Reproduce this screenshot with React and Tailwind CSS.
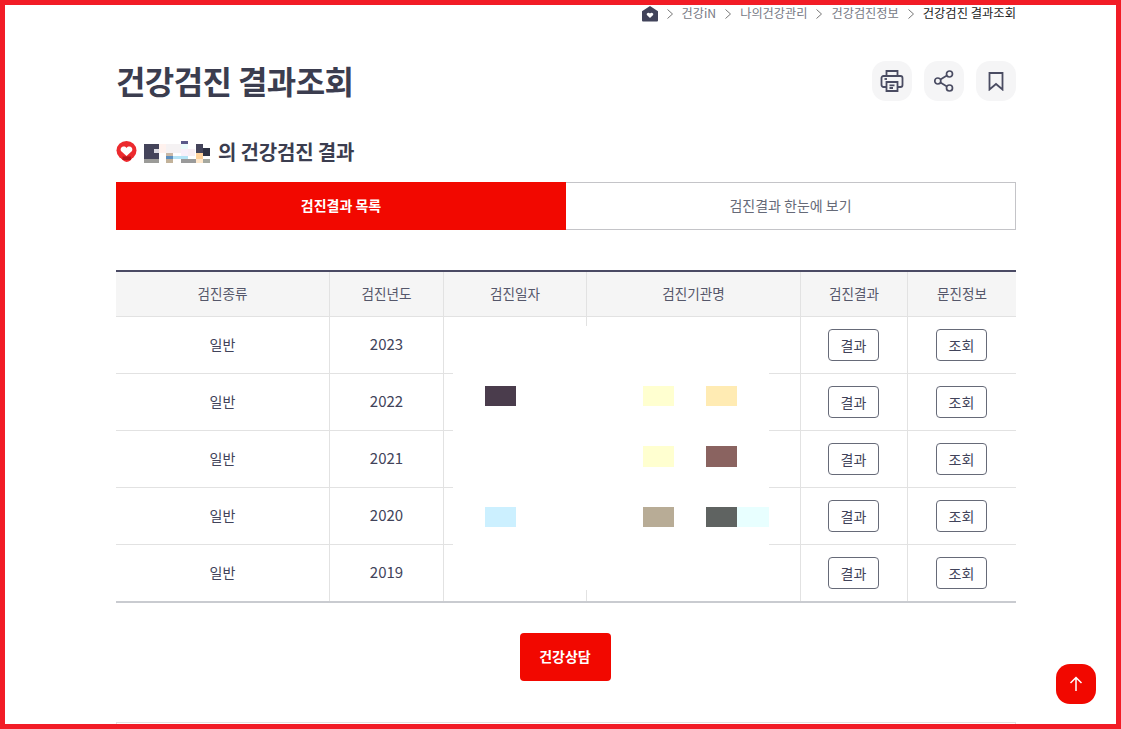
import React from "react";

const rows = ["2023", "2022", "2021", "2020", "2019"];
const font = { fontFamily: '"Noto Sans CJK KR", "Noto Sans", sans-serif' };

function Home() {
  return (
    <svg width="16" height="16" viewBox="0 0 16 16">
      <path d="M0 5.2 8 0l8 5.2V14.5a1 1 0 0 1-1 1H1a1 1 0 0 1-1-1z" fill="#41435a" />
      <path d="M8 12 4.9 8.9C3.9 7.2 6.6 5.8 8 7.4c1.4-1.6 4.1-.2 3.1 1.5z" fill="#fff" />
    </svg>
  );
}

function Chevron() {
  return (
    <svg width="6" height="10" viewBox="0 0 6 10" fill="none" stroke="#777" strokeWidth="1">
      <path d="M.5.5 5.5 5 .5 9.5" />
    </svg>
  );
}

function Mosaic() {
  const cells = [
    [0, 3, 15, 15, "#44445a"], [10, 8, 5, 4, "#dcdce2"], [0, 18, 15, 4, "#9b9b98"],
    [15, 3, 7, 9, "#fff2ee"], [22, 3, 15, 9, "#f5f2f3"], [22, 12, 7, 3, "#c9b8a6"], [22, 15, 7, 3, "#5d8fbe"], [22, 18, 7, 4, "#c2b29a"],
    [29, 15, 15, 3, "#b5e4f6"], [37, 0, 7, 3, "#5a5a8a"], [37, 3, 7, 5, "#eafbfb"], [37, 8, 7, 7, "#f8f0fa"],
    [37, 18, 15, 4, "#9a9a9a"], [44, 8, 7, 7, "#f8eef4"], [52, 3, 7, 9, "#44445a"], [59, 7, 7, 8, "#2e3142"],
    [52, 12, 7, 6, "#ffd29c"], [52, 18, 7, 4, "#ffe8cc"], [59, 18, 7, 4, "#a5a89f"],
  ];
  return (
    <svg width="66" height="22" viewBox="0 0 66 22" shapeRendering="crispEdges">
      {cells.map(([x, y, w, h, c], i) => (
        <rect key={i} x={x} y={y} width={w} height={h} fill={c} />
      ))}
    </svg>
  );
}

function Pin() {
  return (
    <svg width="21" height="22" viewBox="0 0 21 22">
      <ellipse cx="10.5" cy="9.5" rx="10" ry="9.5" fill="#ec2a2e" />
      <path d="M4 16c1.5 2 3.5 4.5 6.5 5 3 0 5-2.5 6.5-5z" fill="#ec2a2e" />
      <path d="M6.5 15.5h8.5V19H6.5z" fill="#b8141a" />
      <path d="M10.5 15 5 10C3.2 6.6 8.2 3.8 10.5 7c2.3-3.2 7.3-.4 5.5 3z" fill="#fff" />
    </svg>
  );
}

function RoundBtn({ children }) {
  return (
    <div className="w-10 h-10 rounded-[14px] bg-[#f5f5f6] flex items-center justify-center">{children}</div>
  );
}

function Cell({ children, className = "" }) {
  return <div className={`flex items-center justify-center border-r border-[#e2e2e2] last:border-r-0 ${className}`}>{children}</div>;
}

function Btn({ children }) {
  return (
    <div className="w-[51px] h-8 pl-px rounded border border-[#666a78] flex items-center justify-center text-[14px] text-[#41435a]">
      {children}
    </div>
  );
}

const grid = "grid grid-cols-[214px_114px_143px_214px_107px_108px]";
const blocks = [
  ["left-[32px] top-[60px] h-[20px]", "bg-[#4a3c4c]"],
  ["left-[190px] top-[60px] h-[20px]", "bg-[#ffffd0]"],
  ["left-[253px] top-[60px] h-[20px]", "bg-[#ffebb3]"],
  ["left-[190px] top-[120px] h-[21px]", "bg-[#ffffd0]"],
  ["left-[253px] top-[120px] h-[21px]", "bg-[#8a6360]"],
  ["left-[32px] top-[181px] h-[20px]", "bg-[#ccf0ff]"],
  ["left-[190px] top-[181px] h-[20px]", "bg-[#b8ac96]"],
  ["left-[253px] top-[181px] h-[20px]", "bg-[#5f6361]"],
  ["left-[284px] top-[181px] w-[32px] h-[20px]", "bg-[#e8ffff]"],
];

export default function App() {
  return (
    <div className="relative h-[729px] overflow-hidden bg-white text-[#41435a]" style={font}>
      <div className="w-[900px] ml-[116px]">
        <div className="h-[27px] flex items-center justify-end gap-[9px] text-[12.2px] text-[#777a85]">
          <Home />
          <Chevron />
          <span>건강iN</span>
          <Chevron />
          <span>나의건강관리</span>
          <Chevron />
          <span>건강검진정보</span>
          <Chevron />
          <span className="text-[#1a1a22] text-[12.3px]">건강검진 결과조회</span>
        </div>

        <div className="mt-[34px] h-10 flex items-center justify-between">
          <h1 className="text-[32px] font-bold tracking-[-0.6px] text-[#3b3d4f] pb-[2px]">건강검진 결과조회</h1>
          <div className="flex gap-[12px]">
            <RoundBtn>
              <svg width="24" height="24" viewBox="0 0 24 24" fill="none" stroke="#4a4c62" strokeWidth="1.8">
                <path d="M6.5 7V2h11v5" />
                <path d="M6.5 18H3.5a2 2 0 0 1-2-2V9a2 2 0 0 1 2-2h17a2 2 0 0 1 2 2v7a2 2 0 0 1-2 2h-3" />
                <path d="M6.5 13h11v9h-11zM9.5 16.3h5M9.5 19h3.5" />
                <path d="M4.5 10h2.5" />
              </svg>
            </RoundBtn>
            <RoundBtn>
              <svg width="20" height="22" viewBox="0 0 20 22" fill="none" stroke="#4a4c62" strokeWidth="1.7">
                <circle cx="15.5" cy="4" r="3" />
                <circle cx="15.5" cy="18" r="3" />
                <circle cx="3.8" cy="11" r="3" />
                <path d="M6.4 9.5l6.5-4M6.4 12.5l6.5 4" />
              </svg>
            </RoundBtn>
            <RoundBtn>
              <svg width="16" height="19" viewBox="0 0 16 19" fill="none" stroke="#4a4c62" strokeWidth="1.8">
                <path d="M1.5 1h13v16.5L8 12l-6.5 5.5z" />
              </svg>
            </RoundBtn>
          </div>
        </div>

        <div className="mt-[38px] h-[25px] flex items-center">
          <Pin />
          <div className="ml-[7px] flex"><Mosaic /></div>
          <span className="ml-[8px] text-[20px] font-bold text-[#3b3d4f] tracking-[-0.2px]">의 건강검진 결과</span>
        </div>

        <div className="mt-[18px] grid grid-cols-2 h-12 text-[14px]">
          <div className="bg-[#f20800] text-white font-bold flex items-center justify-center pb-[2px]">검진결과 목록</div>
          <div className="border border-l-0 border-[#c4c4c8] text-[#666a78] flex items-center justify-center pb-[2px]">검진결과 한눈에 보기</div>
        </div>

        <div className="relative mt-10 text-[14px]">
          <div className={`${grid} h-[47px] border-t-2 border-[#4a4a64] border-b border-b-[#e2e2e2] bg-[#f5f5f5] text-[#55576a] text-[13.6px]`}>
            {["검진종류", "검진년도", "검진일자", "검진기관명", "검진결과", "문진정보"].map((t) => (
              <Cell key={t} className="pb-[2px]">{t}</Cell>
            ))}
          </div>
          {rows.map((y, i) => (
            <div key={y} className={`${grid} ${i === 4 ? "h-[58px] border-b-2 border-[#c9cbd0]" : "h-[57px] border-b border-[#e2e2e2]"}`}>
              <Cell className="pb-px">일반</Cell>
              <Cell className="text-[15px] pb-px">{y}</Cell>
              <Cell />
              <Cell />
              <Cell className="pr-[2px]"><Btn>결과</Btn></Cell>
              <Cell className="pr-[2px]"><Btn>조회</Btn></Cell>
            </div>
          ))}
          <div className="absolute left-[337px] top-[56px] w-[316px] h-[264px] bg-white">
            {blocks.map(([pos, c], i) => (
              <div key={i} className={`absolute w-[31px] ${pos} ${c}`} />
            ))}
          </div>
        </div>

        <div className="mt-[30px] flex justify-center pr-[2px]">
          <div className="w-[91px] h-12 rounded bg-[#f20800] text-white text-[14px] font-bold flex items-center justify-center pb-[2px]">건강상담</div>
        </div>

        <div className="mt-[41px] h-10 border border-[#e2e2e2]" />
      </div>

      <div className="absolute left-[1056px] top-[664px] w-10 h-10 rounded-[14px] bg-[#f20800] flex items-center justify-center">
        <svg width="14" height="16" viewBox="0 0 14 16" fill="none" stroke="#fff" strokeWidth="1.5">
          <path d="M7 15V1.5M1.5 7 7 1.5 12.5 7" />
        </svg>
      </div>

      <div className="absolute inset-0 border-[5px] border-[#f21c26] pointer-events-none" />
    </div>
  );
}
